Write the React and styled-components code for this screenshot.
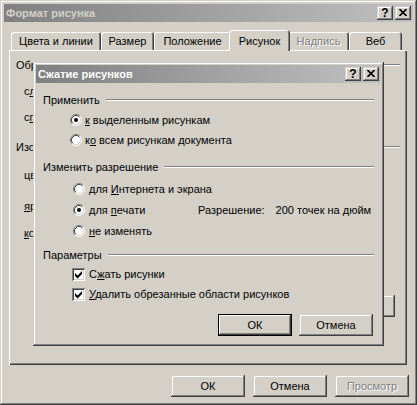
import React from 'react';
import styled, { createGlobalStyle, css } from 'styled-components';

const GlobalStyle = createGlobalStyle`
  html, body { margin: 0; padding: 0; background: #d4d0c8; overflow: hidden; }
  body {
    font-family: "Liberation Sans", Arial, sans-serif;
    font-size: 11px;
    color: #000;
  }
`;

const raised = css`
  box-shadow: inset -1px -1px #404040, inset 1px 1px #d4d0c8,
    inset -2px -2px #808080, inset 2px 2px #fff;
`;

const Window = styled.div`
  position: relative;
  width: 417px;
  height: 405px;
  box-sizing: border-box;
  padding: 4px;
  background: #d4d0c8;
  ${raised}
  display: flex;
  flex-direction: column;
`;

const Dialog = styled.div`
  position: absolute;
  left: 33px;
  top: 62px;
  width: 351px;
  box-sizing: border-box;
  padding: 3px;
  background: #d4d0c8;
  ${raised}
  display: flex;
  flex-direction: column;
  z-index: 5;
`;

const TitleBar = styled.div`
  height: 18px;
  flex: none;
  display: flex;
  align-items: center;
  padding: 0 2px 0 2px;
  background: linear-gradient(to right, #808080, #c0c0c0);
`;

const TitleText = styled.div`
  flex: 1;
  font-weight: bold;
  color: ${p => p.$color};
  white-space: nowrap;
`;

const CaptionButton = styled.div`
  width: 16px;
  height: 14px;
  box-sizing: border-box;
  background: #d4d0c8;
  ${raised}
  display: flex;
  align-items: center;
  justify-content: center;
  margin-left: ${p => p.$gap || 0}px;
  font-weight: bold;
  font-size: 12px;
  line-height: 1;
  padding-bottom: 1px;
`;

const Body = styled.div`
  padding: 8px 6px 0 5px;
  display: flex;
  flex-direction: column;
`;

const TabRow = styled.div`
  display: flex;
  align-items: flex-end;
  padding-left: 2px;
  height: 20px;
`;

const Tab = styled.div`
  width: ${p => p.$w}px;
  height: 18px;
  box-sizing: border-box;
  display: flex;
  align-items: center;
  justify-content: center;
  background: #d4d0c8;
  border-radius: 3px 3px 0 0;
  box-shadow: inset 1px 1px #fff, inset -1px 0 #404040, inset -2px 0 #808080;
  color: ${p => (p.$disabled ? '#808080' : '#000')};
  text-shadow: ${p => (p.$disabled ? '1px 1px #fff' : 'none')};
  white-space: nowrap;
  ${p =>
    p.$active &&
    css`
      height: 21px;
      margin: 0 -2px -1px;
      position: relative;
      z-index: 1;
    `}
`;

const Panel = styled.div`
  height: 315px;
  box-sizing: border-box;
  padding: 5px 7px;
  box-shadow: inset 1px 1px #fff, inset -1px -1px #404040, inset -2px -2px #808080;
  display: flex;
  flex-direction: column;
`;

const GroupHead = styled.div`
  display: flex;
  align-items: center;
  height: 20px;
  margin-top: ${p => p.$mt || 0}px;
  white-space: nowrap;
  &::after {
    content: '';
    flex: 1;
    margin-left: 6px;
    border-top: 1px solid #808080;
    border-bottom: 1px solid #fff;
  }
`;

const FieldLabel = styled.div`
  height: 20px;
  display: flex;
  align-items: center;
  padding-left: 8px;
  margin-top: ${p => p.$mt || 0}px;
  white-space: nowrap;
`;

const ButtonRow = styled.div`
  display: flex;
  justify-content: flex-end;
  gap: ${p => p.$gap || 8}px;
  margin-top: ${p => p.$mt || 0}px;
  padding-right: ${p => p.$pr || 0}px;
`;

const Button = styled.button`
  width: 74px;
  height: 22px;
  box-sizing: border-box;
  border: none;
  padding: 0;
  background: #d4d0c8;
  font: inherit;
  color: #000;
  ${raised}
  ${p =>
    p.$default &&
    css`
      box-shadow: inset 0 0 0 1px #000, inset -2px -2px #404040,
        inset 2px 2px #fff, inset -3px -3px #808080;
    `}
  ${p =>
    p.disabled &&
    css`
      color: #808080;
      text-shadow: 1px 1px #fff;
    `}
`;

const Footer = styled.div`
  display: flex;
  justify-content: flex-end;
  gap: 8px;
  margin-top: 10px;
  padding-right: 4px;
`;

const DialogBody = styled.div`
  padding: 7px 7px 7px 7px;
  display: flex;
  flex-direction: column;
`;

const Row = styled.div`
  display: flex;
  align-items: center;
  height: 20px;
  margin-top: ${p => p.$mt || 0}px;
`;

const Option = styled.div`
  display: flex;
  align-items: center;
  height: 20px;
  box-sizing: border-box;
  padding-left: ${p => p.$indent}px;
  width: ${p => (p.$width ? `${p.$width}px` : 'auto')};
  margin-top: ${p => p.$mt || 0}px;
  gap: ${p => p.$gap || 3}px;
  white-space: nowrap;
`;

const RadioBox = styled.svg`
  flex: none;
  display: block;
`;

const CheckBox = styled.span`
  flex: none;
  width: 13px;
  height: 13px;
  background: #fff;
  box-shadow: inset 1px 1px #808080, inset -1px -1px #fff,
    inset 2px 2px #404040, inset -2px -2px #d4d0c8;
  display: flex;
`;

const Resolution = styled.span`
  white-space: nowrap;
  & > span { margin-left: 11px; }
`;

function Radio({ checked }) {
  return (
    <RadioBox width="12" height="12" viewBox="0 0 12 12">
      <circle cx="6" cy="6" r="5" fill="#fff" />
      <path d="M2.11 9.89A5.5 5.5 0 0 1 9.89 2.11" stroke="#808080" fill="none" />
      <path d="M9.89 2.11A5.5 5.5 0 0 1 2.11 9.89" stroke="#fff" fill="none" />
      <path d="M2.82 9.18A4.5 4.5 0 0 1 9.18 2.82" stroke="#404040" fill="none" />
      <path d="M9.18 2.82A4.5 4.5 0 0 1 2.82 9.18" stroke="#d4d0c8" fill="none" />
      {checked && <circle cx="6" cy="6" r="2" fill="#000" />}
    </RadioBox>
  );
}

function Check() {
  return (
    <CheckBox>
      <svg width="13" height="13" viewBox="0 0 13 13">
        <polygon points="3,5 5.5,7.5 10,3 10,6 5.5,10.5 3,8" fill="#000" />
      </svg>
    </CheckBox>
  );
}

function Caption({ title, color }) {
  return (
    <TitleBar>
      <TitleText $color={color}>{title}</TitleText>
      <CaptionButton>?</CaptionButton>
      <CaptionButton $gap={2}>
        <svg width="8" height="7" viewBox="0 0 8 7">
          <path d="M0.5 0 L7.5 7 M7.5 0 L0.5 7" stroke="#000" strokeWidth="1.6" />
        </svg>
      </CaptionButton>
    </TitleBar>
  );
}

const tabs = [
  { label: 'Цвета и линии', w: 90 },
  { label: 'Размер', w: 53 },
  { label: 'Положение', w: 77 },
  { label: 'Рисунок', w: 61, active: true },
  { label: 'Надпись', w: 61, disabled: true },
  { label: 'Веб', w: 53 },
];

export default function App() {
  return (
    <>
      <GlobalStyle />
      <Window>
        <Caption title="Формат рисунка" color="#d4d0c8" />
        <Body>
          <TabRow>
            {tabs.map(t => (
              <Tab key={t.label} $w={t.w} $active={t.active} $disabled={t.disabled}>
                {t.label}
              </Tab>
            ))}
          </TabRow>
          <Panel>
            <GroupHead>Обрезка</GroupHead>
            <FieldLabel $mt={6}>с<u>л</u>ева:</FieldLabel>
            <FieldLabel $mt={6}>с<u>п</u>рава:</FieldLabel>
            <GroupHead $mt={10}>Изображение</GroupHead>
            <FieldLabel $mt={8}>цвет:</FieldLabel>
            <FieldLabel $mt={11}><u>я</u>ркость:</FieldLabel>
            <FieldLabel $mt={7}><u>к</u>онтрастность:</FieldLabel>
            <ButtonRow $mt={52} $pr={5}>
              <Button>Сжать...</Button>
            </ButtonRow>
          </Panel>
        </Body>
        <Footer>
          <Button>ОК</Button>
          <Button>Отмена</Button>
          <Button disabled>Просмотр</Button>
        </Footer>

        <Dialog>
          <Caption title="Сжатие рисунков" color="#fff" />
          <DialogBody>
            <GroupHead>Применить</GroupHead>
            <Option $indent={27}>
              <Radio checked />
              <span><u>к</u> выделенным рисункам</span>
            </Option>
            <Option $indent={27}>
              <Radio />
              <span>к<u>о</u> всем рисункам документа</span>
            </Option>

            <GroupHead $mt={7}>Изменить разрешение</GroupHead>
            <Option $indent={30} $gap={4} $mt={2}>
              <Radio />
              <span>для <u>И</u>нтернета и экрана</span>
            </Option>
            <Row $mt={1}>
              <Option $indent={30} $gap={4} $width={155}>
                <Radio checked />
                <span>для <u>п</u>ечати</span>
              </Option>
              <Resolution>
                Разрешение:<span>200 точек на дюйм</span>
              </Resolution>
            </Row>
            <Option $indent={30} $gap={4} $mt={1}>
              <Radio />
              <span><u>н</u>е изменять</span>
            </Option>

            <GroupHead $mt={4}>Параметры</GroupHead>
            <Option $indent={29} $gap={4} $mt={-1}>
              <Check />
              <span>С<u>ж</u>ать рисунки</span>
            </Option>
            <Option $indent={29} $gap={4}>
              <Check />
              <span><u>У</u>далить обрезанные области рисунков</span>
            </Option>

            <ButtonRow $mt={10} $gap={7} $pr={1}>
              <Button $default>ОК</Button>
              <Button>Отмена</Button>
            </ButtonRow>
          </DialogBody>
        </Dialog>
      </Window>
    </>
  );
}
